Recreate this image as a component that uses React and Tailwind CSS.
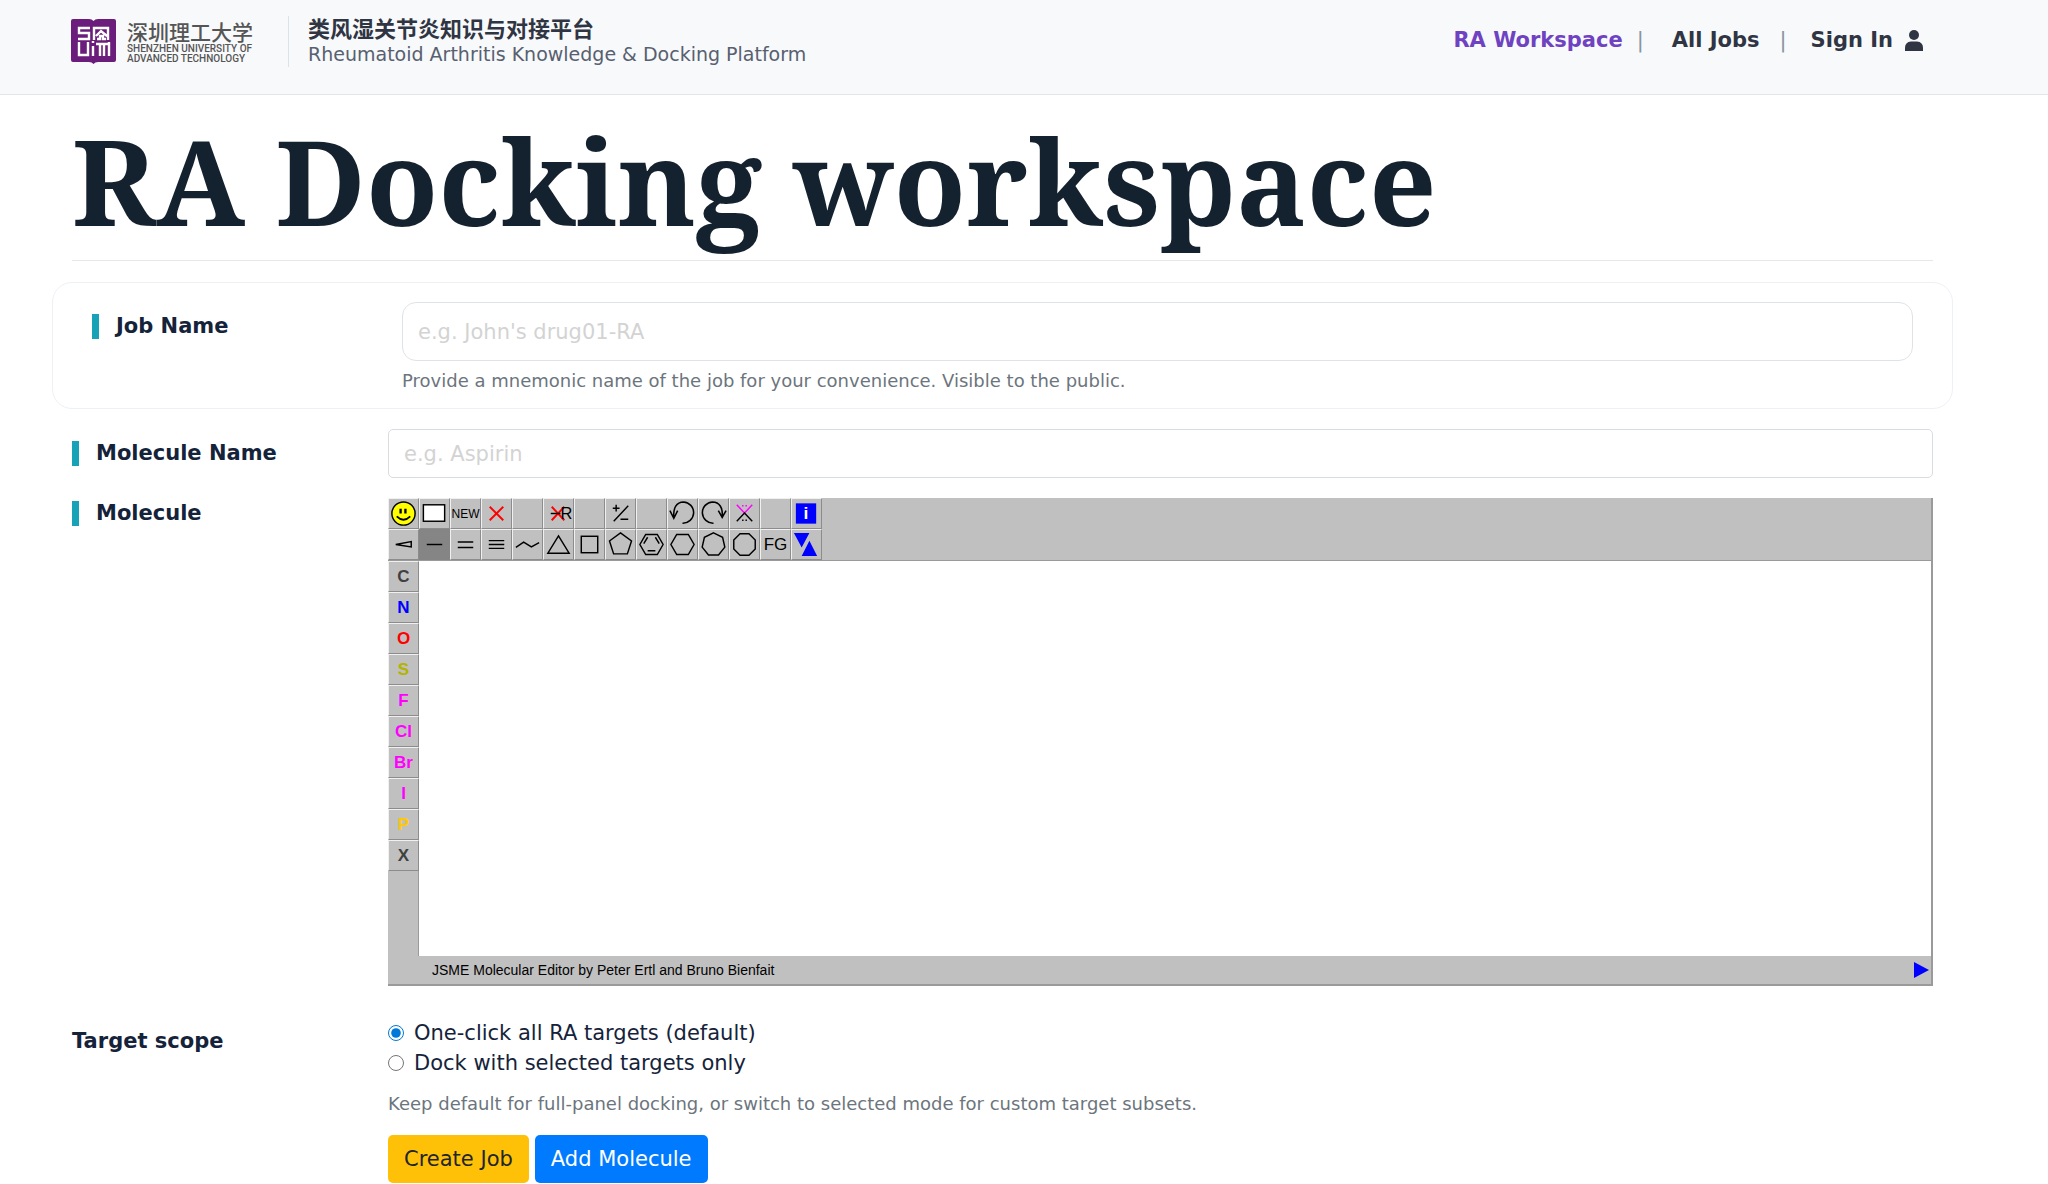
import { useState } from "react";

const polygon = (sides, radius, start) =>
  Array.from({ length: sides }, (_, i) => {
    const a = ((start + (360 / sides) * i) * Math.PI) / 180;
    return `${(15 + radius * Math.cos(a)).toFixed(1)},${(15 + radius * Math.sin(a)).toFixed(1)}`;
  }).join(" ");

function Glyph({ children }) {
  return (
    <svg viewBox="0 0 30 30" className="size-[29px]" fill="none" stroke="#000" strokeWidth="1.5" aria-hidden="true">
      {children}
    </svg>
  );
}

const topTools = [
  {
    name: "SMILES",
    icon: (
      <Glyph>
        <circle cx="15" cy="15" r="12" fill="#ff0" />
        <path d="M12 10v5M17 10v5" strokeWidth="2.4" />
        <path d="M8 18q7 7 14 0" strokeWidth="1.8" />
      </Glyph>
    ),
  },
  { name: "Clear canvas", icon: <Glyph><rect x="3.5" y="6" width="22" height="17" fill="#fff" /></Glyph> },
  { name: "New molecule", text: "NEW" },
  { name: "Delete", icon: <Glyph><path d="M8 8l14 14M22 8L8 22" stroke="#f00" strokeWidth="2" /></Glyph> },
  { name: "Unused one" },
  {
    name: "Delete group",
    icon: (
      <Glyph>
        <path d="M8 8l13 14M21 8L8 22" stroke="#f00" strokeWidth="2" />
        <path d="M7 15h10" />
        <text x="17" y="21" fontSize="17" fill="#000" stroke="none" fontFamily="Liberation Sans, sans-serif">R</text>
      </Glyph>
    ),
  },
  { name: "Unused two" },
  { name: "Charge", icon: <Glyph><path d="M8 23L23 7M7 9.500h7M10.500 6v7M15 21h8" /></Glyph> },
  { name: "Unused three" },
  { name: "Undo", icon: <Glyph><path d="M6 20C5 9 9 3 16 3a11 11 0 0 1-1 22M2 12l4 8 4-8" strokeWidth="1.600" /></Glyph> },
  { name: "Redo", icon: <Glyph><path d="M24 19C25 9 21 3 14 3a11 11 0 0 0 1 22M20 12l4 7 4-7" strokeWidth="1.600" /></Glyph> },
  {
    name: "Spiro",
    icon: (
      <Glyph>
        <path d="M7 6l8 8.500L23 6M12.500 7h1.500M16 7h1.500" stroke="#f0f" />
        <path d="M7 23l8-8.500 8 8.500M12.500 22h1.500M16 22h1.500" />
      </Glyph>
    ),
  },
  { name: "Unused four" },
  {
    name: "Information",
    icon: (
      <Glyph>
        <rect x="4" y="4.500" width="21" height="21" fill="#00f" stroke="none" />
        <text x="14.500" y="21" fontSize="18" fontWeight="700" textAnchor="middle" fill="#fff" stroke="none" fontFamily="Liberation Sans, sans-serif">i</text>
      </Glyph>
    ),
  },
];

const bondTools = [
  { name: "Stereo bond", icon: <Glyph><path d="M7 15l16-3v5.500z" /></Glyph> },
  { name: "Single bond", icon: <Glyph><path d="M7 15h16" /></Glyph> },
  { name: "Double bond", icon: <Glyph><path d="M7 12.500h16M7 18h16" /></Glyph> },
  { name: "Triple bond", icon: <Glyph><path d="M7 11h16M7 15h16M7 19h16" /></Glyph> },
  { name: "Chain", icon: <Glyph><path d="M3 18l8-5.500 8 5L27 13" /></Glyph> },
  { name: "Triangle", icon: <Glyph><path d="M15 6l11 18H4z" /></Glyph> },
  { name: "Square", icon: <Glyph><rect x="6.500" y="6.500" width="17" height="17" /></Glyph> },
  { name: "Pentagon", icon: <Glyph><polygon points={polygon(5, 12, -90)} /></Glyph> },
  {
    name: "Benzene",
    icon: (
      <Glyph>
        <polygon points={polygon(6, 12, 0)} />
        <path d="M7 14l4-6.500M23 14l-4-6.500M11 21.500h8" />
      </Glyph>
    ),
  },
  { name: "Hexagon", icon: <Glyph><polygon points={polygon(6, 12, 0)} /></Glyph> },
  { name: "Heptagon", icon: <Glyph><polygon points={polygon(7, 12, -90)} /></Glyph> },
  { name: "Octagon", icon: <Glyph><polygon points={polygon(8, 12, 22.5)} /></Glyph> },
  { name: "Functional groups", text: "FG" },
  {
    name: "Transfer",
    icon: (
      <Glyph>
        <path d="M2 3h16l-8 15zM18 11l8 16H10z" fill="#00f" stroke="none" />
      </Glyph>
    ),
  },
];

const atoms = [
  ["C", "text-[#404040]"],
  ["N", "text-[#0000ff]"],
  ["O", "text-[#ff0000]"],
  ["S", "text-[#b3b300]"],
  ["F", "text-[#ff00ff]"],
  ["Cl", "text-[#ff00ff]"],
  ["Br", "text-[#ff00ff]"],
  ["I", "text-[#ff00ff]"],
  ["P", "text-[#ffc800]"],
  ["X", "text-[#404040]"],
];

const bevel = "flex size-[31px] shrink-0 items-center justify-center overflow-hidden border";
const raised = "border-t-[#f0f0f0] border-l-[#f0f0f0] border-r-[#8c8c8c] border-b-[#8c8c8c]";

function Tool({ tool, selected, onSelect }) {
  return (
    <button
      type="button"
      aria-label={tool.name}
      onClick={onSelect}
      className={`${bevel} ${selected ? "border-[#858585] bg-[#858585]" : raised} ${tool.text === "NEW" ? "text-xs" : "text-[17px]"}`}
    >
      {tool.icon || tool.text}
    </button>
  );
}

function Editor() {
  const [bond, setBond] = useState("Single bond");
  return (
    <div className="border-r-2 border-b-2 border-[#9a9a9a] bg-[#c0c0c0] font-['Liberation_Sans',sans-serif] text-black">
      <div className="border-b border-[#9a9a9a]">
        <div className="flex">
          {topTools.map((t) => <Tool key={t.name} tool={t} />)}
        </div>
        <div className="flex">
          {bondTools.map((t) => (
            <Tool key={t.name} tool={t} selected={bond === t.name} onSelect={() => setBond(t.name)} />
          ))}
        </div>
      </div>
      <div className="flex h-[395px]">
        <div className="w-[31px] shrink-0 border-r border-[#9a9a9a]">
          {atoms.map(([symbol, color]) => (
            <button key={symbol} type="button" className={`${bevel} ${raised} text-[17px] font-bold ${color}`}>{symbol}</button>
          ))}
        </div>
        <div className="flex-1 bg-white" />
      </div>
      <div className="flex h-7 items-center justify-between pr-0.5 pl-11">
        <span className="text-sm">JSME Molecular Editor by Peter Ertl and Bruno Bienfait</span>
        <button type="button" aria-label="Expand">
          <svg viewBox="0 0 15 16" className="h-4 w-[15px]" aria-hidden="true"><path d="M0 0l15 8-15 8z" fill="#00f" /></svg>
        </button>
      </div>
    </div>
  );
}

function Logo() {
  return (
    <a href="#home" className="flex items-center gap-[11px]" aria-label="Shenzhen University of Advanced Technology">
      <svg viewBox="0 0 45 46" className="h-[46px] w-[45px]" aria-hidden="true">
        <path d="M2 1h16q3 0 4.500 2Q24 1 27 1h16q2 0 2 2v39q0 2-2 2H27q-3 0-4.500 2Q21 44 18 44H2q-2 0-2-2V3q0-2 2-2z" fill="#6b1d7b" />
        <g fill="none" stroke="#fff" strokeWidth="2.400">
          <path d="M19 10H8v5h10v6H7" />
          <path d="M23 22V10h14v12M25 18l5-5 6 5M26 21h3v-3h3v3h3" />
          <path d="M8 24v13h9V24M22 28v10M22 23v2M25 26h13M29 26v12M33 26v12M38 24v14" />
        </g>
      </svg>
      <span className="flex flex-col whitespace-nowrap text-[#555]">
        <span className="font-['Noto_Sans_CJK_SC',sans-serif] text-[21px] leading-[25px] font-medium">深圳理工大学</span>
        <span className="font-[Roboto,sans-serif] text-[10px] leading-[10px] font-medium">
          SHENZHEN UNIVERSITY OF
          <br />
          ADVANCED TECHNOLOGY
        </span>
      </span>
    </a>
  );
}

function Header() {
  return (
    <header className="flex h-[95px] items-start justify-between border-b border-[#e2e5ea] bg-[#f8f9fb] pr-[125px] pl-[71px]">
      <div className="flex items-center pt-3.5">
        <Logo />
        <div className="ml-[35px] h-[51px] border-l border-[#dee2e6]" />
        <div className="ml-[19px] whitespace-nowrap">
          <div className="font-['Noto_Sans_CJK_SC',sans-serif] text-[22px] leading-[26px] font-bold text-[#2f3542]">类风湿关节炎知识与对接平台</div>
          <div className="text-[19px] leading-[28px] text-[#57606f]">Rheumatoid Arthritis Knowledge &amp; Docking Platform</div>
        </div>
      </div>
      <nav className="flex h-20 items-center text-[21px] font-bold whitespace-nowrap text-[#2f3542]">
        <a href="#workspace" className="text-[#6f42c1]">RA Workspace</a>
        <span className="pr-7 pl-3.5 font-normal text-[#8a94a0]">|</span>
        <a href="#jobs">All Jobs</a>
        <span className="pr-6 pl-5 font-normal text-[#8a94a0]">|</span>
        <a href="#signin" className="flex items-center gap-3">
          Sign In
          <svg viewBox="0 0 18 21" className="h-[21px] w-[18px]" fill="currentColor" aria-hidden="true">
            <ellipse cx="9" cy="5" rx="5" ry="5" />
            <path d="M0 21v-3q0-6 6-6.500h6q6 .500 6 6.500v3z" />
          </svg>
        </a>
      </nav>
    </header>
  );
}

function LabelText({ children }) {
  return (
    <span className="flex items-center self-start font-bold">
      <span className="mr-[17px] h-[25px] w-[7px] bg-[#17a2b8]" />
      {children}
    </span>
  );
}

export default function App() {
  const [scope, setScope] = useState("all");
  return (
    <div className="min-h-screen bg-white font-['DejaVu_Sans',sans-serif] text-[21px] leading-[30px] text-[#15233a]">
      <Header />
      <main className="pr-[95px] pl-[52px]">
        <h1 className="mx-5 h-[166px] border-b border-[#e5e7ea] font-['Noto_Serif',serif] text-[118px] leading-[172px] font-bold whitespace-nowrap text-[#14212e]">
          RA Docking workspace
        </h1>
        <form onSubmit={(e) => e.preventDefault()}>
          <section className="mt-[21px] grid grid-cols-[310px_1fr] rounded-[20px] border border-[#edf1f7] px-[39px] pt-[19px] pb-3.5">
            <label htmlFor="job" className="pt-[9px]"><LabelText>Job Name</LabelText></label>
            <div>
              <input
                id="job"
                placeholder="e.g. John's drug01-RA"
                className="block h-[59px] w-full rounded-[14px] border border-[#dfe3e8] px-[15px] placeholder:text-[#d3d3d3]"
              />
              <p className="pt-1.5 text-[18px] leading-[27px] text-[#6c757d]">Provide a mnemonic name of the job for your convenience. Visible to the public.</p>
            </div>
          </section>
          <div className="mx-5 mt-5 grid grid-cols-[316px_1fr] gap-y-5">
            <label htmlFor="molecule" className="pt-[9px]"><LabelText>Molecule Name</LabelText></label>
            <input
              id="molecule"
              placeholder="e.g. Aspirin"
              className="h-[49px] w-full rounded-[5px] border border-[#d9dde2] px-[15px] placeholder:text-[#d3d3d3]"
            />
            <LabelText>Molecule</LabelText>
            <Editor />
          </div>
          <div role="radiogroup" aria-labelledby="scope-label" className="mx-5 mt-8 grid grid-cols-[316px_1fr]">
            <div id="scope-label" className="pt-2 font-bold">Target scope</div>
            <div>
              {[
                ["all", "One-click all RA targets (default)"],
                ["selected", "Dock with selected targets only"],
              ].map(([value, text]) => (
                <label key={value} className="flex items-center gap-2.5">
                  <input
                    type="radio"
                    name="scope"
                    value={value}
                    checked={scope === value}
                    onChange={() => setScope(value)}
                    className="size-4 accent-[#0078d7]"
                  />
                  {text}
                </label>
              ))}
              <p className="pt-3 text-[18px] leading-[27px] text-[#6c757d]">
                Keep default for full-panel docking, or switch to selected mode for custom target subsets.
              </p>
              <div className="mt-[18px] flex gap-1.5">
                <button type="submit" className="h-12 rounded-[5px] bg-[#ffc107] px-4 text-[#212529]">Create Job</button>
                <button type="button" className="h-12 rounded-[5px] bg-[#007bff] px-4 text-white">Add Molecule</button>
              </div>
            </div>
          </div>
        </form>
      </main>
    </div>
  );
}
